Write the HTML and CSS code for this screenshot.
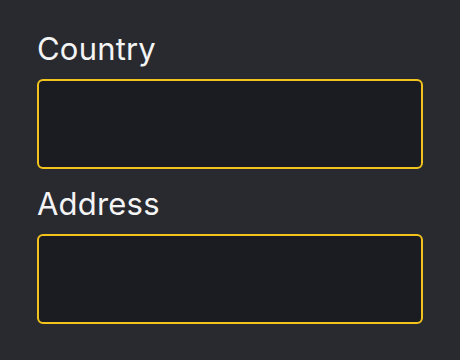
FILE: index.html
```html
<!DOCTYPE html>
<html lang="en">
<head>
    <meta charset="UTF-8">
    <title>form</title>
    <link rel="stylesheet" href="styles.css">
</head>
<body>
    <div class="form">
        <div class="field">
            <label class="label" for="country">Country</label>
            <input class="input" id="country" type="text">
        </div>
        <div class="field">
            <label class="label" for="address">Address</label>
            <input class="input" id="address" type="text">
        </div>
    </div>
</body>
</html>
```

FILE: styles.css
```css
*{
    margin: 0;padding: 0;
    box-sizing: border-box;
}
body{
    background-color: #292a30;
    font-family: Inter, "Noto Sans", sans-serif;
    width: 460px;
    height: 360px;
}
.form{
    padding: 28px 37px 0;
    display: flex;
    flex-direction: column;
    gap: 14px;
}
.field{
    display: flex;
    flex-direction: column;
    gap: 9px;
}
.label{
    color: #f4f4f5;
    font-size: 31px;
    line-height: 42px;
    letter-spacing: 0.2px;
}
.input{
    width: 386px;
    height: 90px;
    background-color: #1b1c22;
    border: 2px solid #f2c31c;
    border-radius: 6px;
    outline: none;
}
```
